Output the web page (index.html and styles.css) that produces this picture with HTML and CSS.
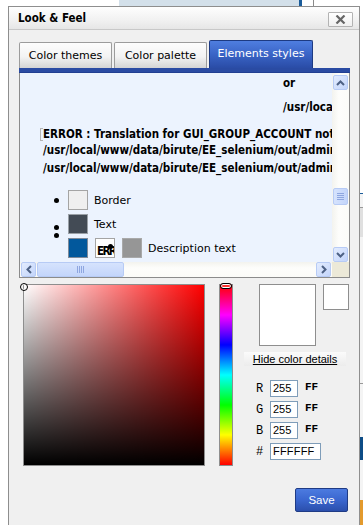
FILE: index.html
```html
<!DOCTYPE html>
<html>
<head>
<meta charset="utf-8">
<link rel="stylesheet" href="styles.css">
</head>
<body>
<div class="page">
  <div class="topstrip">
    <div class="ts-white1"></div>
    <div class="ts-blue"></div>
    <div class="ts-dark"></div>
    <div class="ts-white2"></div>
    <div class="ts-gray"></div>
  </div>
  <div class="main">
    <div class="leftgap"></div>
    <div class="dialog">
      <div class="titlebar">
        <span class="title">Look &amp; Feel</span>
        <div class="closebtn">
          <svg width="11" height="9" viewBox="0 0 11 9"><path d="M1.5 0.5 L9.5 8.5 M9.5 0.5 L1.5 8.5" stroke="#666" stroke-width="2.2" fill="none"/></svg>
        </div>
      </div>
      <div class="body">
        <div class="tabs">
          <div class="tab t1">Color themes</div>
          <div class="tab t2">Color palette</div>
          <div class="tab active">Elements styles</div>
        </div>
        <div class="tabbar"></div>
        <div class="panel">
          <div class="panel-top">
            <div class="content">
              <div class="ln ln-or">or</div>
              <div class="ln ln-usr">/usr/local/www/data/birute/EE_selenium/out/admin</div>
              <div class="ln ln-err"><span class="bracket"></span>ERROR : Translation for GUI_GROUP_ACCOUNT not found</div>
              <div class="ln ln-path">/usr/local/www/data/birute/EE_selenium/out/admin/</div>
              <div class="ln ln-path">/usr/local/www/data/birute/EE_selenium/out/admin/</div>
              <div class="list">
                <div class="item">
                  <div class="bullets"><span class="dot"></span></div>
                  <span class="sw sw-border"></span>
                  <span class="lbl">Border</span>
                </div>
                <div class="item">
                  <div class="bullets two"><span class="dot"></span><span class="dot"></span></div>
                  <span class="sw sw-text"></span>
                  <span class="lbl">Text</span>
                </div>
                <div class="item">
                  <div class="bullets"></div>
                  <span class="sw sw-blue"></span>
                  <span class="errbox"><span class="errtxt">ERROR</span><span class="dot errdot"></span></span>
                  <span class="sw sw-gray"></span>
                  <span class="lbl">Description text</span>
                </div>
              </div>
            </div>
            <div class="vscroll">
              <div class="sbtn">
                <svg width="9" height="6" viewBox="0 0 9 6"><path d="M1 5 L4.5 1.5 L8 5" stroke="#4d6185" stroke-width="2" fill="none"/></svg>
              </div>
              <div class="vtrack">
                <div class="vthumb">
                  <svg width="7" height="7" viewBox="0 0 7 7"><path d="M0 0.5H7M0 2.5H7M0 4.5H7M0 6.5H7" stroke="#8ea6e0" stroke-width="1"/></svg>
                </div>
              </div>
              <div class="sbtn">
                <svg width="9" height="6" viewBox="0 0 9 6"><path d="M1 1 L4.5 4.5 L8 1" stroke="#4d6185" stroke-width="2" fill="none"/></svg>
              </div>
            </div>
          </div>
          <div class="panel-bottom">
            <div class="hscroll">
              <div class="sbtn">
                <svg width="6" height="9" viewBox="0 0 6 9"><path d="M5 1 L1.5 4.5 L5 8" stroke="#4d6185" stroke-width="2" fill="none"/></svg>
              </div>
              <div class="htrack">
                <div class="hthumb">
                  <svg width="7" height="7" viewBox="0 0 7 7"><path d="M0.5 0V7M2.5 0V7M4.5 0V7M6.5 0V7" stroke="#8ea6e0" stroke-width="1"/></svg>
                </div>
              </div>
              <div class="sbtn">
                <svg width="6" height="9" viewBox="0 0 6 9"><path d="M1 1 L4.5 4.5 L1 8" stroke="#4d6185" stroke-width="2" fill="none"/></svg>
              </div>
            </div>
            <div class="corner"></div>
          </div>
        </div>

        <div class="picker">
          <div class="sv">
            <span class="svmark"></span>
          </div>
          <div class="hue">
            <span class="huemark"></span>
          </div>
          <div class="details">
            <div class="previews">
              <div class="prev-big"></div>
              <div class="prev-small"></div>
            </div>
            <div class="hidebtn">Hide color details</div>
            <div class="rows">
              <div class="row"><span class="ch">R</span><span class="inp">255</span><span class="hex">FF</span></div>
              <div class="row"><span class="ch">G</span><span class="inp">255</span><span class="hex">FF</span></div>
              <div class="row"><span class="ch">B</span><span class="inp">255</span><span class="hex">FF</span></div>
              <div class="row"><span class="ch">#</span><span class="inp wide">FFFFFF</span></div>
            </div>
          </div>
        </div>
        <div class="footer">
          <div class="save">Save</div>
        </div>
      </div>
    </div>
    <div class="sidestrip">
      <div class="ss-white"></div>
      <div class="ss-blue"></div>
      <div class="ss-lt"></div>
      <div class="ss-line"></div>
      <div class="ss-mid"></div>
      <div class="ss-lt2"></div>
      <div class="ss-line"></div>
      <div class="ss-lt3"></div>
      <div class="ss-navy"></div>
      <div class="ss-lt4"></div>
      <div class="ss-orange"></div>
    </div>
  </div>
</div>
</body>
</html>
```

FILE: styles.css
```css
* { box-sizing: border-box; }
html, body { margin: 0; padding: 0; background: #fff; }
body { font-family: "DejaVu Sans", Verdana, sans-serif; font-size: 11px; color: #000; }

.page { width: 363px; height: 525px; overflow: hidden; }

.topstrip { display: flex; height: 6px; }
.ts-white1 { width: 119px; background: #fff; }
.ts-blue { width: 180px; background: #d3e0ea; }
.ts-dark { width: 3px; background: #1b5c9a; }
.ts-white2 { width: 11px; background: #fff; }
.ts-gray { width: 1px; background: #8a8a8a; }

.main { display: flex; height: 519px; }
.leftgap { width: 8px; flex: none; }

.dialog {
  width: 352px; flex: none;
  border: 1px solid #8e8e8e; border-bottom: none;
  background: #f0f0f0;
  display: flex; flex-direction: column;
}

.titlebar {
  height: 23px; flex: none;
  border-bottom: 1px solid #c8c8c8;
  background: linear-gradient(#fefefe, #f1f1f1 60%, #e6e6e6);
  display: flex; align-items: flex-start; justify-content: space-between;
  padding: 0 6px 0 9px;
}
.title {
  font-family: "DejaVu Sans", sans-serif; font-weight: bold; font-size: 11.5px;
  font-stretch: condensed;
  line-height: 13px; margin-top: 5px;
}
.closebtn {
  width: 25px; height: 15px; margin-top: 5px;
  border: 1px solid #b3b3b3; border-radius: 1px;
  background: linear-gradient(#ffffff, #f0f0f0);
  display: flex; align-items: center; justify-content: center;
}

.body { padding: 10px 9px 0 10px; display: flex; flex-direction: column; }

.tabs { display: flex; align-items: flex-end; gap: 2px; height: 28px; }
.tab {
  height: 26px; border: 1px solid #9c9c9c; border-bottom: none;
  border-radius: 2px 2px 0 0;
  background: linear-gradient(#fdfdfd, #f3f3f3 55%, #d4d4d4);
  display: flex; align-items: center; justify-content: center;
  font-size: 11px; color: #000;
}
.t1 { width: 93px; }
.t2 { width: 93px; }
.tab.active {
  width: 104px; height: 28px;
  border-color: #1d3a82;
  background: linear-gradient(#4f7ee0, #3a64c6 50%, #2a4ca6);
  color: #fff;
  padding-bottom: 2px;
}
.tabbar { height: 5px; background: #2a4ba3; border-bottom: 1px solid #213f92; }

.panel {
  height: 205px;
  border: 1px solid #8b8b8b; border-top: none;
  display: flex; flex-direction: column;
  background: #ecf3fe;
}
.panel-top { display: flex; height: 189px; }
.content { flex: 1; min-width: 0; overflow: hidden; padding-top: 4px; }
.ln { white-space: nowrap; font-weight: bold; font-size: 11.5px; font-stretch: condensed; line-height: 13px; }
.ln-or { padding-left: 263px; height: 24px; }
.ln-usr { padding-left: 263px; height: 24px; }
.ln-err { padding-left: 20px; height: 19px; display: flex; align-items: center; }
.bracket { width: 3px; height: 13px; border: 1px solid #b5b5b5; border-right: none; flex: none; }
.ln-path { padding-left: 23px; height: 18px; }

.list { margin-top: 10px; display: flex; flex-direction: column; gap: 4px; }
.item { display: flex; align-items: center; height: 20px; }
.bullets { width: 48px; display: flex; flex-direction: column; align-items: flex-end; padding-right: 9px; gap: 3px; }
.bullets.two { margin-top: 15px; }
.dot { display: block; width: 5px; height: 5px; border-radius: 50%; background: #000; }
.sw { width: 20px; height: 20px; border: 1px solid #a4a4a4; flex: none; }
.sw-border { background: #efefef; }
.sw-text { background: #434b55; border-color: #9aa0a6; }
.sw-blue { background: #02589c; border-color: #7f8a99; }
.sw-gray { background: #969696; border-color: #a9a9a9; margin-left: 7px; }
.lbl { margin-left: 6px; font-size: 11px; }
.errbox {
  width: 20px; height: 20px; margin-left: 7px; flex: none;
  border: 1px solid #a4a4a4; background: #fff;
  overflow: hidden; position: relative;
}
.errtxt { position: absolute; left: 1px; top: 6px; font-weight: bold; font-size: 11.5px; font-stretch: condensed; line-height: 13px; letter-spacing: -1.6px; }
.errdot { position: absolute; left: 12px; top: 5px; }

.vscroll {
  width: 17px; flex: none; display: flex; flex-direction: column;
  background: linear-gradient(to right, #f3f3ee, #fdfdfb 40%, #fbfbf8);
  padding: 2px 1px 0 1px;
}
.sbtn {
  width: 15px; height: 15px; flex: none;
  border: 1px solid #b7cbf5; border-radius: 2px;
  background: linear-gradient(135deg, #e3ecfe, #c3d5fb);
  display: flex; align-items: center; justify-content: center;
}
.vtrack { flex: 1; display: flex; flex-direction: column; align-items: stretch; padding-top: 98px; }
.vthumb {
  height: 17px; border: 1px solid #b7cbf5; border-radius: 2px;
  background: linear-gradient(to right, #d6e3fd, #c3d5fb);
  display: flex; align-items: center; justify-content: center;
}

.panel-bottom { display: flex; height: 15px; }
.hscroll {
  flex: 1; display: flex; align-items: center;
  background: linear-gradient(#f3f3ee, #fdfdfb 40%, #fbfbf8);
  padding: 0 1px;
}
.htrack { flex: 1; display: flex; align-items: center; padding-left: 1px; }
.hthumb {
  width: 87px; height: 15px; border: 1px solid #b7cbf5; border-radius: 2px;
  background: linear-gradient(#d6e3fd, #c3d5fb);
  display: flex; align-items: center; justify-content: center;
}
.corner { width: 17px; background: #ece9d8; }

.picker { display: flex; margin-top: 6px; height: 182px; }
.sv {
  width: 182px; height: 182px; margin-left: 4px; position: relative;
  border: 1px solid #8e8e8e;
  background:
    linear-gradient(to top, #000, rgba(0,0,0,0)),
    linear-gradient(to right, #fff, rgba(255,255,255,0)),
    #f00;
}
.svmark {
  position: absolute; left: -4px; top: -2px;
  width: 8px; height: 8px; border-radius: 50%;
  border: 1px solid #000; background: transparent;
  box-shadow: inset 0 0 0 1px #fff;
}
.hue {
  width: 14px; margin-left: 14px; position: relative;
  border: 1px solid #8e8e8e;
  background: linear-gradient(to bottom, #f00 0%, #f0f 16.7%, #00f 33.3%, #0ff 50%, #0f0 66.7%, #ff0 83.3%, #f00 100%);
}
.huemark {
  position: absolute; left: 0px; top: -2px;
  width: 12px; height: 6px; border-radius: 3px;
  border: 1px solid #000; background: #f33;
  box-shadow: inset 0 0 0 1px #fff;
}

.details { margin-left: 11px; width: 106px; display: flex; flex-direction: column; }
.previews { display: flex; gap: 7px; padding-left: 15px; align-items: flex-start; }
.prev-big { width: 57px; height: 62px; border: 1px solid #8e8e8e; background: #fff; }
.prev-small { width: 26px; height: 26px; border: 1px solid #8e8e8e; background: #fff; }
.hidebtn {
  margin-top: 6px; width: 102px; height: 14px;
  background: linear-gradient(#fbfbfb, #ececec);
  font-family: "Liberation Sans", Arial, sans-serif; font-size: 11px;
  text-decoration: underline; text-align: center; line-height: 14px;
}
.rows { margin-top: 14px; display: flex; flex-direction: column; gap: 4px; }
.row { display: flex; align-items: center; height: 17px; }
.ch { width: 26px; padding-left: 12px; font-family: "Liberation Mono", "Courier New", monospace; font-size: 12px; }
.inp {
  width: 28px; height: 17px; border: 1px solid #7f9db9; background: #fff;
  font-family: "Liberation Sans", Arial, sans-serif; font-size: 11px; line-height: 15px;
  padding-left: 2px;
}
.inp.wide { width: 51px; letter-spacing: 0.2px; }
.hex { margin-left: 7px; align-self: flex-start; margin-top: 1px; font-family: "Liberation Mono", "Courier New", monospace; font-weight: bold; font-size: 11px; }

.footer { display: flex; justify-content: flex-end; padding-right: 2px; margin-top: 22px; }
.save {
  width: 53px; height: 24px; border: 1px solid #1f3b85; border-radius: 2px;
  background: linear-gradient(#4c7be0, #3a66cf 50%, #2b4fac);
  color: #fff; font-family: "Liberation Sans", Arial, sans-serif; font-size: 11.5px;
  display: flex; align-items: center; justify-content: center;
}

.sidestrip { width: 3px; flex: none; display: flex; flex-direction: column; background: #f4f4f4; }
.ss-white { height: 187px; background: #fff; }
.ss-blue { height: 1px; background: #1b5c9a; }
.ss-lt { height: 13px; }
.ss-line { height: 1px; background: #999; }
.ss-mid { height: 29px; background: #e0e0e0; }
.ss-lt2 { height: 146px; }
.ss-lt3 { height: 53px; }
.ss-navy { height: 23px; background: #0d4c86; }
.ss-lt4 { height: 40px; }
.ss-orange { flex: 1; background: #e39a2d; }
```
